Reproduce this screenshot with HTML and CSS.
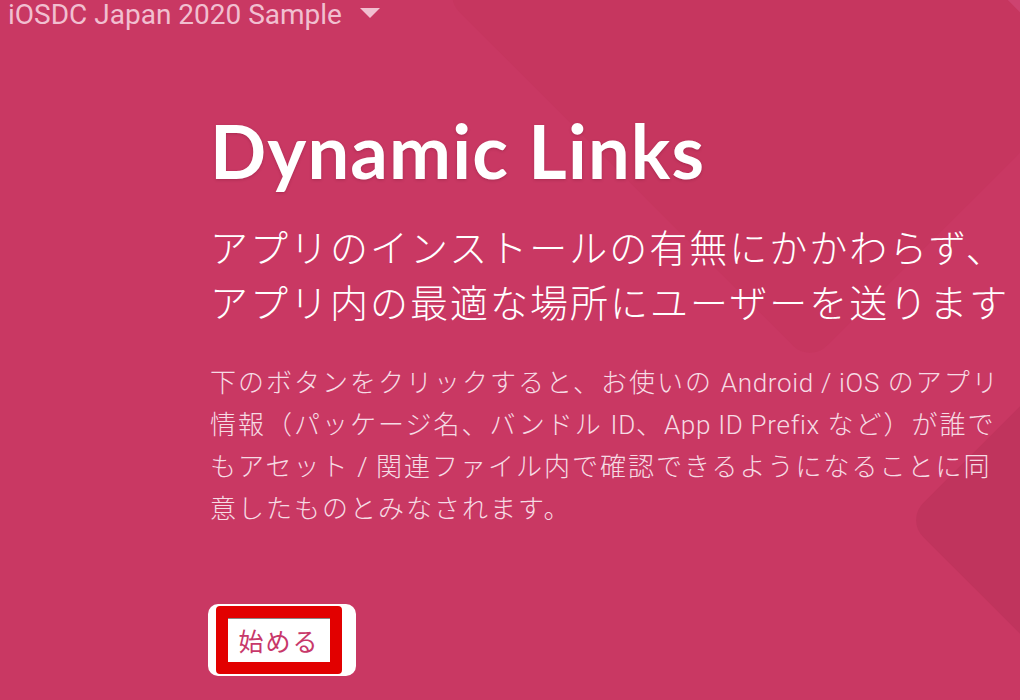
FILE: index.html
```html
<!DOCTYPE html>
<html lang="ja">
<head>
<meta charset="utf-8">
<title>Dynamic Links</title>
<link rel="stylesheet" href="styles.css">
</head>
<body>
<div class="page">
  <div class="bg-shape shape-a"></div>
  <div class="bg-shape shape-b"></div>
  <div class="bg-shape shape-c"></div>
  <header class="topbar">
    <span class="project">iOSDC Japan 2020 Sample</span>
    <svg class="caret" width="20" height="10" viewBox="0 0 20 10"><path d="M0 0 L20 0 L10 10 Z" fill="currentColor"/></svg>
  </header>
  <main class="hero">
    <h1 class="title">Dynamic Links</h1>
    <p class="subtitle">アプリのインストールの有無にかかわらず、<br>アプリ内の最適な場所にユーザーを送ります</p>
    <p class="desc">下のボタンをクリックすると、お使いの <span class="latin">Android / iOS</span> のアプリ情報（パッケージ名、バンドル <span class="latin">ID</span>、<span class="latin">App ID Prefix</span> など）が誰でもアセット <span class="latin">/</span> 関連ファイル内で確認できるようになることに同意したものとみなされます。</p>
    <button class="start"><span class="start-mark">始める</span></button>
  </main>
</div>
</body>
</html>
```

FILE: styles.css
```css
html, body {
  margin: 0;
  padding: 0;
}
body {
  background: #c93863;
  font-family: Roboto, "Noto Sans CJK JP", sans-serif;
  overflow: hidden;
}
.page {
  position: relative;
  width: 1020px;
  height: 700px;
  overflow: hidden;
  background: #c93863;
}
.bg-shape {
  position: absolute;
  transform: rotate(45deg);
  border-radius: 24px;
}
.shape-a {
  width: 520px;
  height: 520px;
  left: 550px;
  top: -265px;
  background: #c6365f;
}
.shape-b {
  width: 260px;
  height: 260px;
  left: 960px;
  top: 390px;
  background: #c0345d;
}
.shape-c {
  width: 300px;
  height: 300px;
  left: 1000px;
  top: -220px;
  background: #cd4370;
}
.topbar {
  position: relative;
  display: flex;
  align-items: center;
  gap: 18px;
  height: 30px;
  padding-left: 8px;
  color: #f1bfd0;
}
.project {
  font-family: Roboto, sans-serif;
  font-size: 28px;
  line-height: 30px;
}
.caret {
  margin-top: -4px;
}
.hero {
  position: relative;
  margin-left: 210px;
  padding-top: 81px;
  color: #fff;
}
.title {
  margin: 0;
  font-family: Lato, sans-serif;
  font-weight: 700;
  font-size: 74px;
  line-height: 80px;
  letter-spacing: 1.2px;
  text-shadow: 0 1px 3px rgba(80, 0, 30, 0.25);
}
.subtitle {
  margin: 27px 0 0;
  font-family: "Noto Sans CJK JP", sans-serif;
  font-weight: 300;
  font-size: 38px;
  line-height: 55px;
  letter-spacing: 2px;
  white-space: nowrap;
}
.desc {
  margin: 32px 0 0;
  width: 800px;
  font-family: "Noto Sans CJK JP", sans-serif;
  font-weight: 300;
  font-size: 26px;
  line-height: 42px;
  letter-spacing: 2px;
  color: #f6dbe4;
}
.latin {
  font-family: Roboto, sans-serif;
  font-weight: 300;
  line-height: 1;
  letter-spacing: 0.7px;
}
.start {
  margin: 76px 0 0 -2px;
  display: inline-flex;
  align-items: center;
  justify-content: flex-start;
  box-sizing: border-box;
  width: 148px;
  height: 72px;
  padding: 0 0 1px 8px;
  border: none;
  border-radius: 10px;
  background: #fff;
}
.start-mark {
  box-sizing: border-box;
  width: 126px;
  height: 68px;
  display: flex;
  align-items: center;
  justify-content: center;
  border: 12px solid #e20000;
  border-radius: 4px;
  box-shadow: inset 0 1px 0 #888;
  font-family: "Noto Sans CJK JP", sans-serif;
  font-size: 25px;
  letter-spacing: 2px;
  color: #c8386a;
}
```
